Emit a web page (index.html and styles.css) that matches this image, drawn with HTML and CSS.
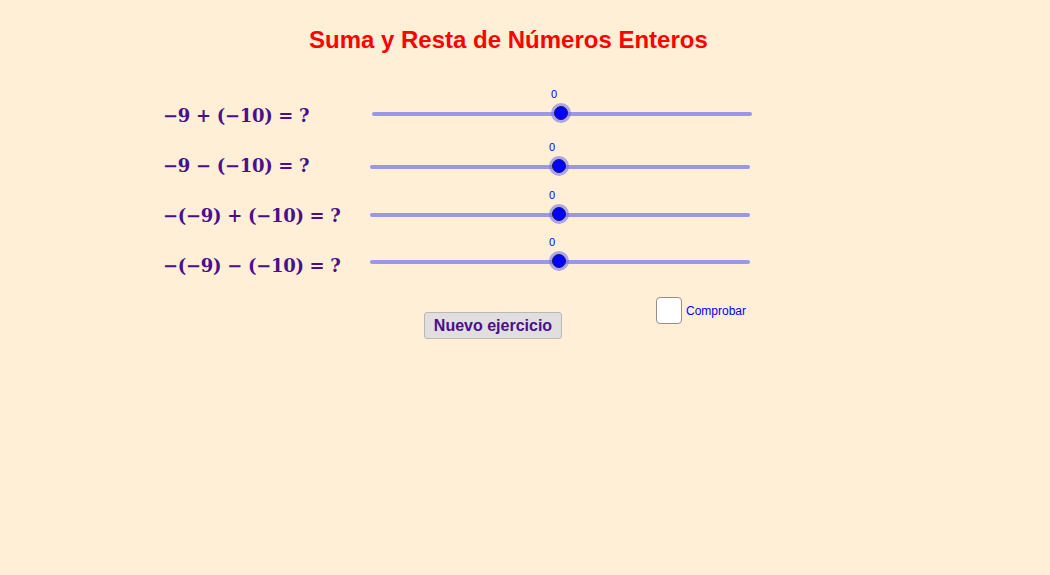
FILE: index.html
```html
<!DOCTYPE html>
<html lang="es">
<head>
<meta charset="utf-8">
<title>Suma y Resta de Números Enteros</title>
<link rel="stylesheet" href="styles.css">
</head>
<body>
<div class="app">
  <h1 class="title">Suma y Resta de Números Enteros</h1>
  <div class="rows">
    <div class="row">
      <div class="eq">−9 + (−10) = ?</div>
      <div class="slider slider-a">
        <div class="val">0</div>
        <div class="track"><span class="knob"></span></div>
      </div>
    </div>
    <div class="row">
      <div class="eq">−9 − (−10) = ?</div>
      <div class="slider">
        <div class="val">0</div>
        <div class="track"><span class="knob"></span></div>
      </div>
    </div>
    <div class="row">
      <div class="eq">−(−9) + (−10) = ?</div>
      <div class="slider">
        <div class="val">0</div>
        <div class="track"><span class="knob"></span></div>
      </div>
    </div>
    <div class="row">
      <div class="eq">−(−9) − (−10) = ?</div>
      <div class="slider">
        <div class="val">0</div>
        <div class="track"><span class="knob"></span></div>
      </div>
    </div>
  </div>
  <div class="controls">
    <button class="btn" type="button">Nuevo ejercicio</button>
    <label class="check">
      <span class="box"></span>
      <span class="check-label">Comprobar</span>
    </label>
  </div>
</div>
</body>
</html>
```
FILE: styles.css
```css
html, body {
  margin: 0;
  padding: 0;
  background: #ffefd6;
}
.app {
  width: 1050px;
  height: 575px;
  background: #ffefd6;
  font-family: "Liberation Sans", Arial, sans-serif;
  overflow: hidden;
}
.title {
  margin: 0;
  padding-top: 26px;
  height: 75px;
  box-sizing: border-box;
  padding-left: 309px;
  font-size: 24px;
  line-height: 28px;
  font-weight: bold;
  color: #ff0000;
}
.rows {
  padding-left: 163px;
  display: flex;
  flex-direction: column;
}
.row {
  display: flex;
  align-items: flex-end;
  height: 50px;
}
.row:nth-child(1) { height: 51px; }
.row:nth-child(2) { height: 53px; }
.row:nth-child(3) { height: 48px; }
.row:nth-child(4) { height: 47px; }
.eq {
  width: 207px;
  font-family: "DejaVu Serif", "Liberation Serif", serif;
  font-weight: bold;
  font-size: 18px;
  letter-spacing: -0.3px;
  color: #4b0f8c;
  line-height: 24px;
  margin-bottom: -2px;
  white-space: nowrap;
}
.row:nth-child(2) .eq { margin-bottom: 1px; }
.row:nth-child(3) .eq { margin-bottom: -1px; }
.row:nth-child(4) .eq { margin-bottom: -4px; }
.slider {
  width: 380px;
  display: flex;
  flex-direction: column;
  padding-bottom: 10px;
}
.slider-a { margin-left: 2px; }
.val {
  text-align: center;
  padding-right: 16px;
  font-size: 11px;
  line-height: 12px;
  color: #0000ff;
  margin-bottom: 12px;
}
.track {
  position: relative;
  height: 4px;
  border-radius: 2px;
  background: #9a96e8;
}
.knob {
  position: absolute;
  left: 50%;
  top: 50%;
  width: 12px;
  height: 12px;
  margin-left: -8px;
  margin-top: -8px;
  border-radius: 50%;
  background: #0000ff;
  border: 1px solid #1a1a5a;
  box-shadow: 0 0 0 3px rgba(120, 115, 235, 0.6);
}
.controls {
  display: flex;
  align-items: flex-start;
  padding-left: 424px;
  margin-top: 23px;
}
.btn {
  margin: 15px 0 0 0;
  width: 138px;
  height: 27px;
  padding: 0;
  background: #e0dede;
  border: 1px solid #bdb8b3;
  border-radius: 3px;
  font-family: "Liberation Sans", Arial, sans-serif;
  font-weight: bold;
  font-size: 16px;
  color: #4b0f8c;
}
.check {
  display: flex;
  align-items: center;
  margin-left: 94px;
}
.box {
  width: 24px;
  height: 25px;
  background: #ffffff;
  border: 1px solid #9a8f86;
  border-radius: 4px;
}
.check-label {
  margin-left: 4px;
  font-size: 12px;
  color: #0000ff;
}
```
